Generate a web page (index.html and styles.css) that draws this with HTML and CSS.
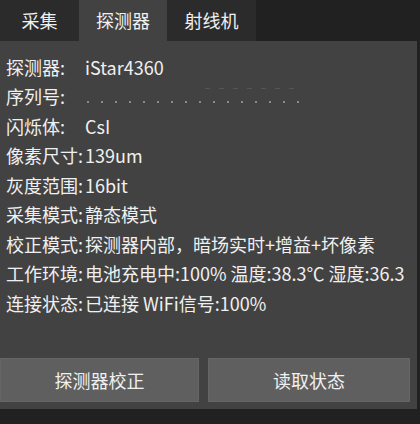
FILE: index.html
```html
<!DOCTYPE html>
<html lang="zh-CN">
<head>
    <meta charset="UTF-8">
    <meta name="viewport" content="width=device-width, initial-scale=1.0">
    <title>探测器</title>
    <link rel="stylesheet" href="styles.css">
</head>
<body>
    <div class="tabs">
        <div class="tab">采集</div>
        <div class="tab tab-active">探测器</div>
        <div class="tab">射线机</div>
    </div>

    <div class="panel">
        <div class="info">
            <div class="row"><span class="label wide">探测器:</span><span>iStar4360</span></div>
            <div class="row"><span class="label wide">序列号:</span><span class="masked"></span></div>
            <div class="row"><span class="label wide">闪烁体:</span><span>CsI</span></div>
            <div class="row"><span class="label">像素尺寸:</span><span>139um</span></div>
            <div class="row"><span class="label">灰度范围:</span><span>16bit</span></div>
            <div class="row"><span class="label">采集模式:</span><span>静态模式</span></div>
            <div class="row"><span class="label">校正模式:</span><span>探测器内部，暗场实时+增益+坏像素</span></div>
            <div class="row"><span class="label">工作环境:</span><span>电池充电中:100% 温度:38.3℃ 湿度:36.3</span></div>
            <div class="row"><span class="label">连接状态:</span><span>已连接 WiFi信号:100%</span></div>
        </div>

        <div class="actions">
            <button class="button button-left">探测器校正</button>
            <button class="button button-right">读取状态</button>
        </div>
    </div>
</body>
</html>
```

FILE: styles.css
```css
:root {
    --bg: #212121;
    --tab: #2b2b2b;
    --panel: #424242;
    --button: #5f5f5f;
    --text: #f0f0f0;
}

* {
    margin: 0;
    padding: 0;
    box-sizing: border-box;
    font-family: "Noto Sans CJK SC", "Noto Sans", sans-serif;
}

body {
    background-color: var(--bg);
    color: var(--text);
    width: 420px;
    height: 424px;
    overflow: hidden;
}

/* Tabs */
.tabs {
    display: flex;
    height: 41px;
}

.tab {
    width: 79px;
    display: flex;
    align-items: center;
    justify-content: center;
    background: var(--tab);
    font-size: 18px;
    padding-bottom: 2px;
}

.tab + .tab {
    width: 88px;
}

.tab-active {
    background: var(--panel);
}

.tab:last-child {
    width: 89px;
}

/* Panel */
.panel {
    width: 417px;
    height: 368px;
    background: var(--panel);
    display: flex;
    flex-direction: column;
}

.info {
    padding: 11px 0 0 6px;
    display: flex;
    flex-direction: column;
}

.row {
    height: 29.5px;
    display: flex;
    align-items: center;
    font-size: 18px;
    white-space: nowrap;
}

.label {
    margin-right: 2px;
}

.label.wide {
    width: 77px;
}

.masked {
    display: inline-block;
    width: 220px;
    height: 22px;
    background:
        radial-gradient(circle, #8a8a8a 0.9px, transparent 1.3px) -4px 15px / 14px 4px repeat-x,
        repeating-linear-gradient(90deg, #555 0 5px, transparent 5px 14px) 120px 3px / 90px 1px no-repeat;
}

/* Buttons */
.actions {
    margin-top: auto;
    margin-bottom: 7px;
    display: flex;
    gap: 9px;
}

.button {
    height: 44px;
    border: 1px solid #666;
    background: var(--button);
    color: var(--text);
    font-size: 18px;
    font-family: "Noto Sans CJK SC", sans-serif;
}

.button-left {
    width: 199px;
}

.button-right {
    width: 202px;
}
```
